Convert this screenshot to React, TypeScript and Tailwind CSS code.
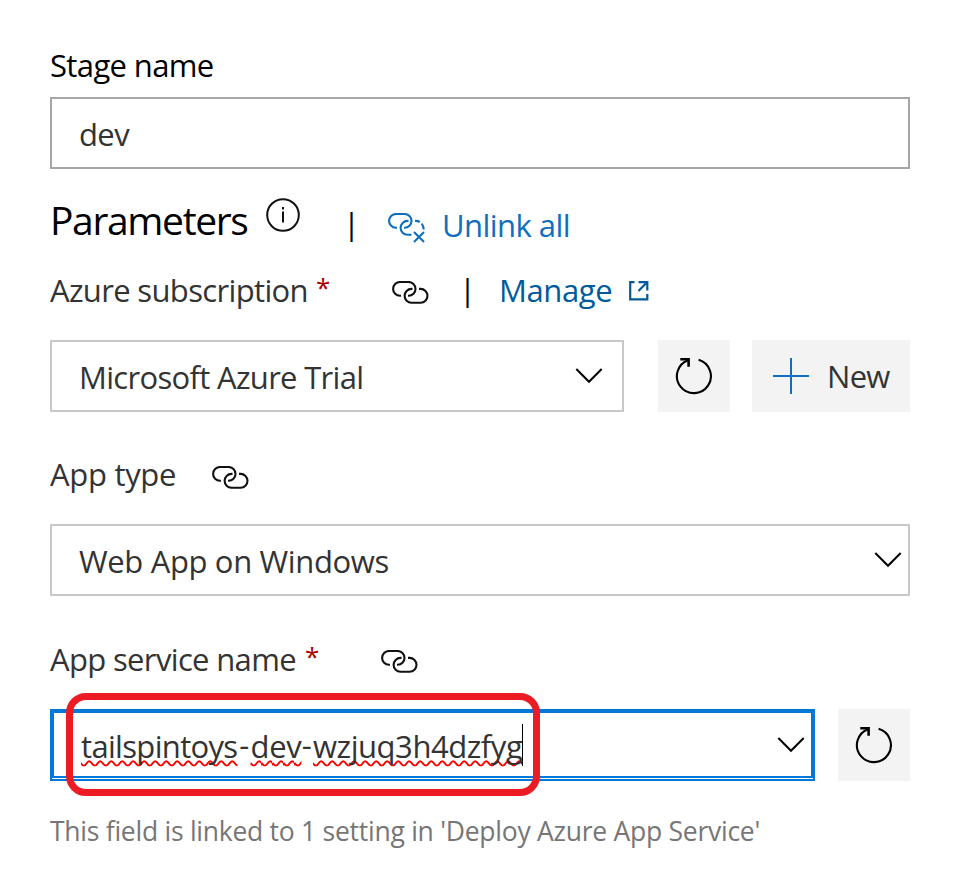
import type { ReactNode } from "react";

function LinkIcon({ className = "" }: { className?: string }) {
  return (
    <svg className={`shrink-0 ${className}`} width="37" height="23" viewBox="0 0 37 23" fill="none" stroke="#111" strokeWidth="2.1">
      <path d="M9 14.8H8A6.9 6.9 0 0 1 8 1H16.6A6.9 6.9 0 0 1 16.6 14.8H16" />
      <path d="M20.5 7.9H19.5A6.9 6.9 0 0 0 19.5 21.7H28.6A6.9 6.9 0 0 0 28.6 7.9H27" />
    </svg>
  );
}

function UnlinkIcon({ className = "" }: { className?: string }) {
  return (
    <svg className={`shrink-0 ${className}`} width="37" height="30" viewBox="0 0 37 30" fill="none" stroke="#106ebe" strokeWidth="2.1">
      <path d="M9 14.8H8A6.9 6.9 0 0 1 8 1H16.6A6.9 6.9 0 0 1 16.6 14.8H16" />
      <path d="M20.5 7.9H19.5A6.9 6.9 0 0 0 19.5 21.7H23.5" />
      <path d="M27 7.9Q29.8 7.7 31.8 9M33.6 10.6Q35.7 12.8 35.7 16.5" />
      <path d="M26 19L36 29M36 19L26 29" />
    </svg>
  );
}

function Chevron() {
  return (
    <svg className="shrink-0" width="28" height="16" viewBox="0 0 28 16" fill="none" stroke="#000" strokeWidth="2">
      <path d="M1.3 1L14 13.8L26.7 1" />
    </svg>
  );
}

function RefreshButton() {
  return (
    <button className="flex h-[72px] w-[72px] shrink-0 items-center justify-center bg-[#f3f3f3]">
      <svg width="38" height="38" viewBox="0 0 38 38" fill="none" stroke="#000" strokeWidth="2.1">
        <path d="M23.6 2.8A17 17 0 1 1 13 3.2" />
        <path d="M5.3 2.3H13.6V9.8" strokeWidth="2.6" />
      </svg>
    </button>
  );
}

function Label({ children, className = "" }: { children: ReactNode; className?: string }) {
  return <span className={`text-[31px] leading-10 whitespace-nowrap ${className}`}>{children}</span>;
}

function Required() {
  return <span className="w-[76px] text-[26px] leading-[34px] text-[#a80000]">*</span>;
}

const words = [
  { text: "tailspintoys", className: "w-[157px] tracking-[-0.67px]" },
  { text: "dev", className: "w-[50px] tracking-[-0.3px]" },
  { text: "wzjuq3h4dzfyg", className: "w-[209px] tracking-[-0.45px]" },
];

export default function App() {
  return (
    <main className="flex h-[869px] w-[960px] flex-col bg-white px-[50px] pt-[45px] font-['Open_Sans',sans-serif] text-[#333]">
      <div className="flex h-[52px]">
        <Label className="tracking-[-0.63px] text-black">Stage name</Label>
      </div>
      <div className="flex h-[72px] items-center border-2 border-[#a6a6a6] pl-[27px]">
        <Label className="pt-0.5 tracking-[-0.6px]">dev</Label>
      </div>

      <div className="flex h-[101px] pt-5">
        <h1 className="w-[216px] pt-px text-[39px] leading-[60px] tracking-[-1.35px] whitespace-nowrap text-black">Parameters</h1>
        <svg className="mt-[9px] shrink-0" width="34" height="34" viewBox="0 0 34 34" fill="none" stroke="#111" strokeWidth="2">
          <circle cx="17" cy="17" r="15.8" />
          <path d="M17 13.5V24.5M17 9V11.5" />
        </svg>
        <Label className="ml-[43px] mt-[14px] w-[45px] text-black">|</Label>
        <UnlinkIcon className="mt-[24px]" />
        <Label className="ml-[17px] mt-[16px] tracking-[-0.55px] text-[#106ebe]">Unlink all</Label>
      </div>
      <div className="flex h-[70px]">
        <Label className="w-[266px] tracking-[-0.65px]">Azure subscription</Label>
        <Required />
        <LinkIcon className="mt-[10.5px]" />
        <Label className="-mt-px ml-[30px] w-[40px] text-black">|</Label>
        <Label className="w-[130px] tracking-[-0.4px] text-[#005a9e]">Manage</Label>
        <svg className="mt-[11px]" width="20" height="20" viewBox="0 0 20 20" fill="none" stroke="#005a9e" strokeWidth="2.2">
          <path d="M5.5 1.1H1.2V18.3H18.3V13M9.5 1.1H18.3V9.5M18.3 1.1L9.5 10" />
        </svg>
      </div>
      <div className="flex h-[72px]">
        <div className="flex w-[574px] items-center justify-between border-2 border-[#c8c8c8] pl-[27px] pr-[19px]">
          <Label className="pt-0.5 tracking-[-0.68px]">Microsoft Azure Trial</Label>
          <Chevron />
        </div>
        <div className="w-[34px]" />
        <RefreshButton />
        <button className="ml-[22px] flex w-[158px] items-center bg-[#f3f3f3] pl-[21px]">
          <svg width="36" height="36" viewBox="0 0 36 36" stroke="#106ebe" strokeWidth="2">
            <path d="M18 0V36M0 18H36" />
          </svg>
          <Label className="ml-[18px] tracking-[-0.7px]">New</Label>
        </button>
      </div>

      <div className="flex h-[112px] pt-[42px]">
        <Label className="w-[162px] tracking-[-0.3px]">App type</Label>
        <LinkIcon className="mt-[11.5px]" />
      </div>
      <div className="flex h-[72px] items-center justify-between border-2 border-[#c8c8c8] pl-[27px] pr-[6px]">
        <Label className="pt-0.5 tracking-[-0.35px]">Web App on Windows</Label>
        <Chevron />
      </div>

      <div className="flex h-[113px] pt-[43px]">
        <Label className="w-[255px] tracking-[-0.65px]">App service name</Label>
        <Required />
        <LinkIcon className="mt-[10.5px]" />
      </div>
      <div className="relative flex h-[72px] justify-between">
        <div className="w-[765px] border-2 border-[#0078d7] pb-px">
          <div className="flex h-full items-center justify-between border-2 border-[#0078d7] pl-[27px] pr-[6px]">
            <div className="flex items-center">
              {words.map((word, i) => (
                <span key={word.text} className="flex">
                  {i > 0 && <Label className="w-[12.5px] text-center">-</Label>}
                  <Label className={`underline decoration-[#f00] decoration-wavy decoration-2 underline-offset-[2px] [text-decoration-skip-ink:none] pt-0.5 ${word.className}`}>
                    {word.text}
                  </Label>
                </span>
              ))}
              <span className="h-[42px] w-px bg-black" />
            </div>
            <Chevron />
          </div>
        </div>
        <RefreshButton />
        <div className="absolute -top-4 left-4 h-[103px] w-[474px] rounded-[20px] border-[7px] border-[#ed1c24]" />
      </div>
      <p className="mt-[30px] text-[26.5px] leading-10 tracking-[-0.26px] whitespace-nowrap text-[#767676]">
        This field is linked to 1 setting in 'Deploy Azure App Service'
      </p>
    </main>
  );
}
